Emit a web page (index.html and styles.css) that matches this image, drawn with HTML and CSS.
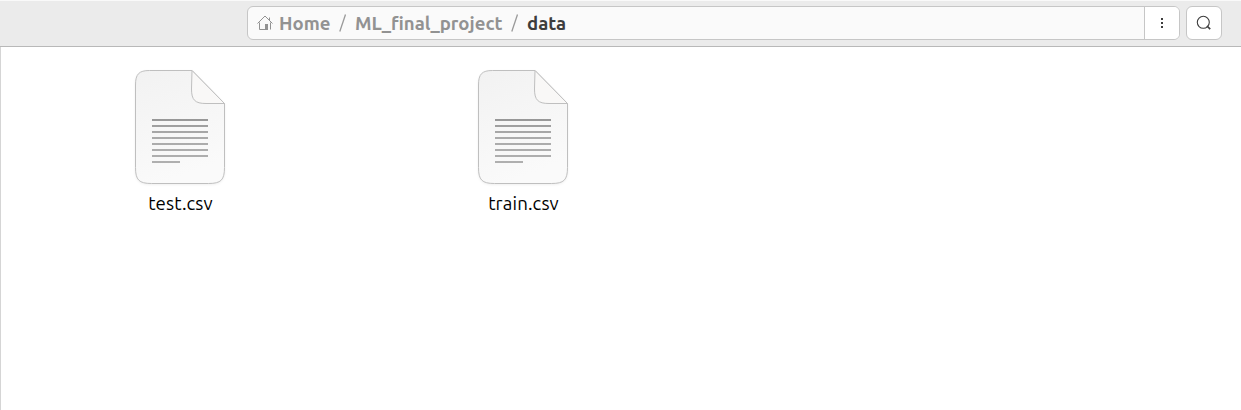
FILE: index.html
```html
<!DOCTYPE html>
<html lang="en">
<head>
<meta charset="utf-8">
<title>data</title>
<link rel="stylesheet" href="styles.css">
</head>
<body>
<svg width="0" height="0" class="defs" aria-hidden="true">
  <defs>
    <linearGradient id="paper" x1="0" y1="0" x2="0.3" y2="1">
      <stop offset="0" stop-color="#f2f2f2"/><stop offset="1" stop-color="#fafafa"/>
    </linearGradient>
    <linearGradient id="ink" gradientUnits="userSpaceOnUse" x1="0" y1="53" x2="0" y2="101">
      <stop offset="0" stop-color="#969696"/><stop offset="0.35" stop-color="#aaa"/><stop offset="1" stop-color="#b0b0b0"/>
    </linearGradient>
    <symbol id="document" viewBox="0 0 101 122">
      <path d="M19.500 5.500H62L94.500 38.500V102.500C94.500 115 91 118.500 78.500 118.500H21.500C9 118.500 5.500 115 5.500 102.500V20C5.500 9 9 5.500 19.500 5.500Z" fill="url(#paper)" stroke="#bfbfbf"/>
      <path d="M62 5.500L61.500 24C61.500 35 65 38.500 76 38.500H94.500Z" fill="#f9f8f7" stroke="#bfbfbf" stroke-linejoin="round"/>
      <path d="M22 54h56v2h-56zM22 60h56v2h-56zM22 66h56v2h-56zM22 72h56v2h-56zM22 78h56v2h-56zM22 84h56v2h-56zM22 90h56v2h-56zM22 96h28v2h-28z" fill="url(#ink)"/>
    </symbol>
  </defs>
</svg>
<header class="headerbar">
  <div class="pathbar">
    <nav class="crumbs">
      <svg class="home" viewBox="0 0 16 16"><path d="M.5 8.500L8 1l7.500 7.500M2.500 7.500v7H8M13.500 7.500v7M12.500 5.500v-3" fill="none" stroke="#929292"/><path d="M8 9h3v6H8z" fill="#929292"/></svg>
      <span class="crumb crumb-home">Home</span>
      <svg class="slash" viewBox="0 0 8 18"><path d="M6.500 .5L.8 17.500"/></svg>
      <span class="crumb crumb-project">ML_final_project</span>
      <svg class="slash" viewBox="0 0 8 18"><path d="M6.500 .5L.8 17.500"/></svg>
      <span class="crumb crumb-current">data</span>
    </nav>
    <button class="menu" aria-label="Menu"><svg width="16" height="16" viewBox="0 0 16 16"><path d="M7 3h2v2H7zM7 7h2v2H7zM7 11h2v2H7z" fill="#3d3d3d"/></svg></button>
  </div>
  <button class="search" aria-label="Search"><svg width="16" height="16" viewBox="0 0 16 16" fill="none" stroke="#3d3d3d"><circle cx="7.300" cy="7.300" r="6" stroke-width="1.100"/><path d="M11 11l3.200 3.200" stroke-width="1.700"/></svg></button>
</header>
<main class="files">
  <figure class="file"><svg class="icon"><use href="#document"/></svg><figcaption class="label">test.csv</figcaption></figure>
  <figure class="file"><svg class="icon"><use href="#document"/></svg><figcaption class="label">train.csv</figcaption></figure>
</main>
</body>
</html>
```
FILE: styles.css
```css
* { box-sizing: border-box; }
body {
  margin: 0;
  height: 410px;
  overflow: hidden;
  display: flex;
  flex-direction: column;
  background: #fff;
  font-family: Ubuntu, "Noto Sans", sans-serif;
}
.defs { position: absolute; }
.headerbar {
  flex: none;
  display: flex;
  gap: 6px;
  height: 47px;
  padding: 5px 19px 6px 247px;
  background: #ebebeb;
  border-top: 1px solid #f9f9f9;
  border-bottom: 1px solid #b8b8b8;
}
.pathbar {
  display: flex;
  flex: 1;
  height: 34px;
  border: 1px solid #c6c6c6;
  border-radius: 6px;
  background: #fafafa;
  overflow: hidden;
}
.crumbs {
  flex: 1;
  display: flex;
  align-items: center;
  padding-left: 9px;
  font-size: 18.6px;
  font-weight: 700;
  line-height: 30px;
  color: #929292;
  white-space: nowrap;
}
.crumb { padding-top: 2px; }
.home { width: 16px; height: 16px; margin-right: 6px; }
.crumb-home { width: 60px; }
.crumb-project { width: 156px; }
.crumb-current { color: #3d3d3d; }
.slash { width: 8px; height: 18px; margin-right: 8px; fill: none; stroke: #999; stroke-width: 1.3; }
.menu, .search {
  display: flex;
  align-items: center;
  justify-content: center;
  padding: 0;
  background: #fff;
}
.menu { width: 35px; border: 0; border-left: 1px solid #c6c6c6; }
.search { width: 36px; height: 34px; border: 1px solid #c6c6c6; border-radius: 6px; }
.files {
  flex: 1;
  display: flex;
  padding: 18px 0 0 8px;
  border-left: 1px solid #d5d5d5;
}
.file {
  width: 343px;
  margin: 0;
  display: flex;
  flex-direction: column;
  align-items: center;
}
.icon { width: 101px; height: 122px; filter: drop-shadow(0 1px 1px rgba(0, 0, 0, .06)); }
.label { margin-top: 5px; font-size: 18.67px; line-height: 24px; letter-spacing: .12px; color: #000; }
```
